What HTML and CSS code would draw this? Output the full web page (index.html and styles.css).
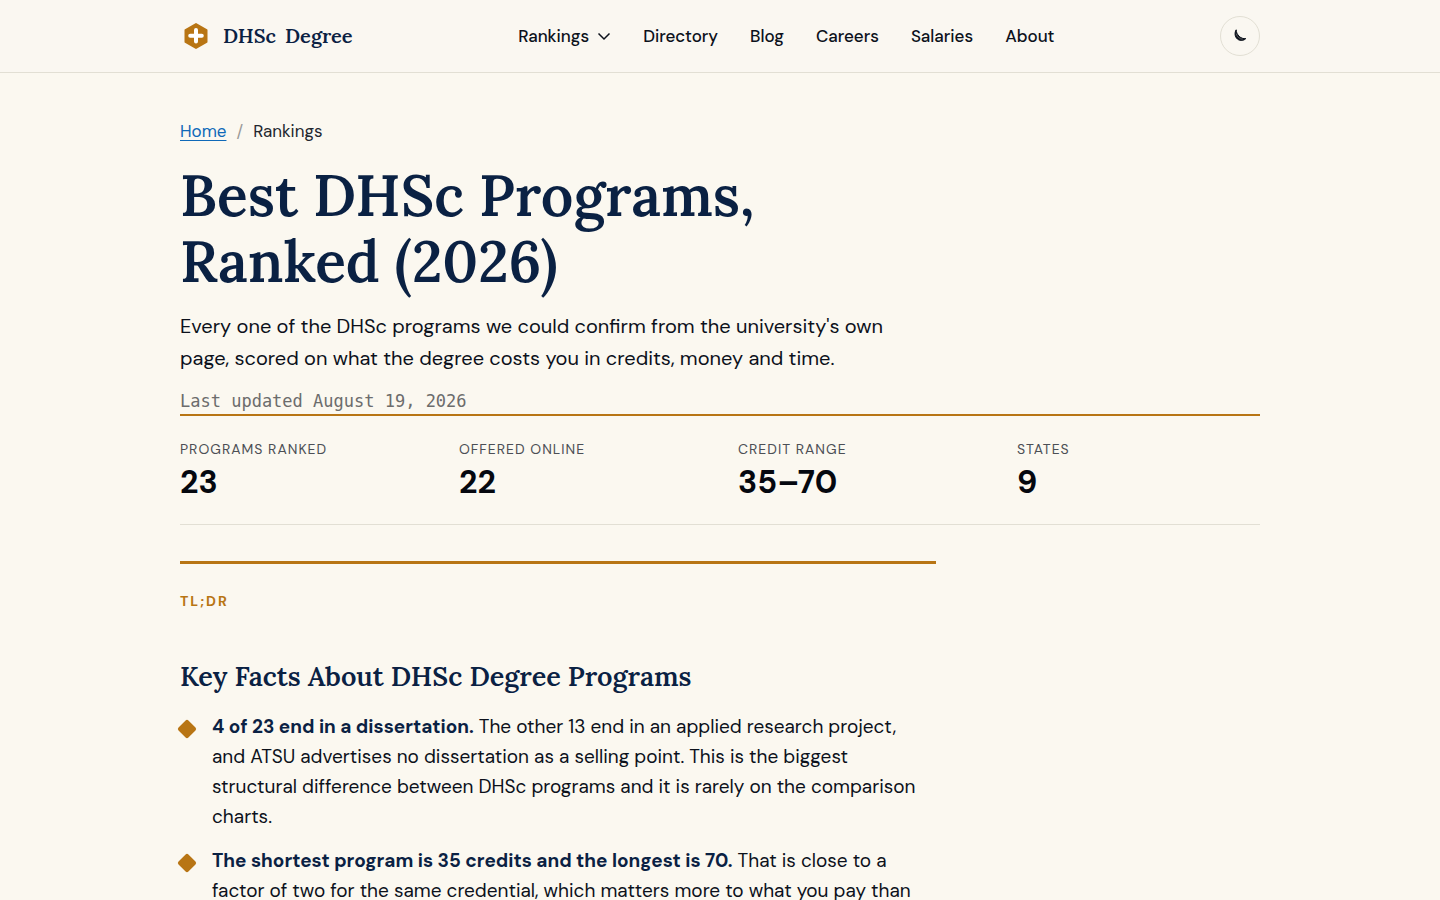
FILE: index.html
```html
<!DOCTYPE html>
<html lang="en">
<head>
<meta charset="UTF-8" />
<meta name="viewport" content="width=device-width, initial-scale=1" />
<title>Best DHSc Programs, Ranked (2026)</title>
<link rel="stylesheet" href="styles.css">
</head>
<body>
  <header class="site-header">
    <div class="container header-inner">
      <a class="brand" href="#">
        <svg class="brand-mark" viewBox="0 0 32 32" aria-hidden="true">
          <path d="M16 4 L26.5 10 V22 L16 28 L5.5 22 V10 Z" fill="#b87514" stroke="#b87514" stroke-width="2" stroke-linejoin="round" />
          <path d="M16 10 V21.5 M10.2 15.7 H21.8" stroke="#fff" stroke-width="4" stroke-linecap="round" />
        </svg>
        <span class="brand-name"><span>DHSc</span> <span>Degree</span></span>
      </a>

      <nav class="main-nav" aria-label="Main">
        <a href="#">Rankings
          <svg class="chevron" viewBox="0 0 14 14" aria-hidden="true"><path d="M1.5 4.5 L7 10 L12.5 4.5" /></svg>
        </a>
        <a href="#">Directory</a>
        <a href="#">Blog</a>
        <a href="#">Careers</a>
        <a href="#">Salaries</a>
        <a href="#">About</a>
      </nav>

      <button class="theme-toggle" type="button" aria-label="Toggle dark mode">
        <svg viewBox="0 0 14 14" aria-hidden="true">
          <path d="M3.2 0.8 C1.4 3.6 1.6 7.6 4.4 10 C6.8 12.1 10.4 12 12.8 9.6 C10.4 9.9 8 9.1 6.2 7.3 C4.4 5.6 3.2 3.4 3.2 0.8 Z" />
          <path class="shine" d="M3.2 4.6 C4 7.8 6.4 9.9 9.6 10.3" />
        </svg>
      </button>
    </div>
  </header>

  <main class="container">
    <nav class="breadcrumb" aria-label="Breadcrumb">
      <a href="#">Home</a>
      <span class="sep">/</span>
      <span>Rankings</span>
    </nav>

    <div class="hero">
      <h1>Best DHSc Programs, Ranked (2026)</h1>
      <p class="lead">Every one of the DHSc programs we could confirm from the university's own page, scored on what the degree costs you in credits, money and time.</p>
      <p class="updated">Last updated August 19, 2026</p>
    </div>

    <dl class="stats">
      <div>
        <dt>Programs ranked</dt>
        <dd>23</dd>
      </div>
      <div>
        <dt>Offered online</dt>
        <dd>22</dd>
      </div>
      <div>
        <dt>Credit range</dt>
        <dd>35–70</dd>
      </div>
      <div>
        <dt>States</dt>
        <dd>9</dd>
      </div>
    </dl>

    <section class="tldr">
      <p class="eyebrow">TL;DR</p>
      <h2>Key Facts About DHSc Degree Programs</h2>
      <ul class="facts">
        <li><strong>4 of 23 end in a dissertation.</strong> The other 13 end in an applied research project, and ATSU advertises no dissertation as a selling point. This is the biggest structural difference between DHSc programs and it is rarely on the comparison charts.</li>
        <li><strong>The shortest program is 35 credits and the longest is 70.</strong> That is close to a factor of two for the same credential, which matters more to what you pay than</li>
      </ul>
    </section>
  </main>
</body>
</html>
```
FILE: styles.css
```css
:root {
  --bg: #fbf8f0;
  --navy: #0a2143;
  --gold: #b87514;
  --line: #e2dfd4;
  --sans: "DM Sans", Inter, Roboto, sans-serif;
  --serif: Lora, "Liberation Serif", serif;
}

* { box-sizing: border-box; }
body { margin: 0; background: var(--bg); color: #0c111b; font-family: var(--sans); font-size: 19px; line-height: 30px; }
h1, h2, p, ul, dl, dd { margin: 0; padding: 0; }
a { color: inherit; text-decoration: none; }
.container { width: 100%; max-width: 1128px; margin: 0 auto; padding: 0 24px; }

/* header */
.site-header { background: #faf7f1; border-bottom: 1px solid var(--line); }
.header-inner { display: flex; align-items: center; justify-content: space-between; height: 72px; }
.brand { display: flex; align-items: center; gap: 11px; color: var(--navy); font-family: var(--serif); font-size: 20px; line-height: 28px; font-weight: 600; }
.brand-mark { width: 32px; height: 32px; }
.brand-name { display: flex; gap: 9px; }
.main-nav { display: flex; gap: 32px; font-size: 17px; font-weight: 500; }
.main-nav a { display: flex; align-items: center; gap: 8px; }
.chevron { width: 14px; height: 14px; fill: none; stroke: currentColor; stroke-width: 1.5; }
.theme-toggle { display: grid; place-items: center; width: 40px; height: 40px; padding: 0; border: 1px solid var(--line); border-radius: 50%; background: none; cursor: pointer; }
.theme-toggle svg { width: 14px; height: 14px; fill: #0c111b; stroke: #0c111b; }
.theme-toggle .shine { fill: none; stroke: #8a8a88; stroke-width: 0.6; }

/* hero */
.breadcrumb { display: flex; gap: 10px; padding-top: 47px; font-size: 17px; line-height: 22px; color: #22262e; }
.breadcrumb a { color: #0f69b8; text-decoration: underline 1px; text-underline-offset: 3px; }
.breadcrumb .sep { color: #9a9a98; }
.hero { max-width: 740px; padding-top: 21px; }
h1 { color: var(--navy); font-family: var(--serif); font-size: 57px; line-height: 66px; font-weight: 600; }
.lead { margin-top: 15px; font-size: 20px; line-height: 32px; }
.updated { margin-top: 14px; color: #6c6c6c; font-family: "DejaVu Sans Mono", monospace; font-size: 17px; line-height: 26px; }

/* stats */
.stats { display: grid; grid-template-columns: repeat(4, 1fr); gap: 36px; padding: 23px 0 22px; border-top: 2px solid var(--gold); border-bottom: 1px solid var(--line); }
.stats dt { margin-bottom: 3px; color: #4c4f55; font-size: 14px; line-height: 20px; letter-spacing: 1px; text-transform: uppercase; }
.stats dd { color: #05080f; font-size: 32px; line-height: 40px; font-weight: 700; }

/* key facts */
.tldr { max-width: 756px; margin-top: 36px; padding-top: 26px; border-top: 3px solid var(--gold); }
.eyebrow { color: var(--gold); font-size: 14px; line-height: 22px; font-weight: 700; letter-spacing: 2px; }
h2 { margin-top: 47px; color: var(--navy); font-family: var(--serif); font-size: 27px; line-height: 34px; font-weight: 600; }
.facts { margin-top: 19px; list-style: none; }
.facts li { position: relative; padding: 0 8px 0 32px; margin-bottom: 14px; }
.facts li::before { content: ""; position: absolute; top: 10px; left: 0; width: 14px; height: 14px; border-radius: 2px; background: var(--gold); transform: rotate(45deg); }
.facts strong { color: var(--navy); }
```
